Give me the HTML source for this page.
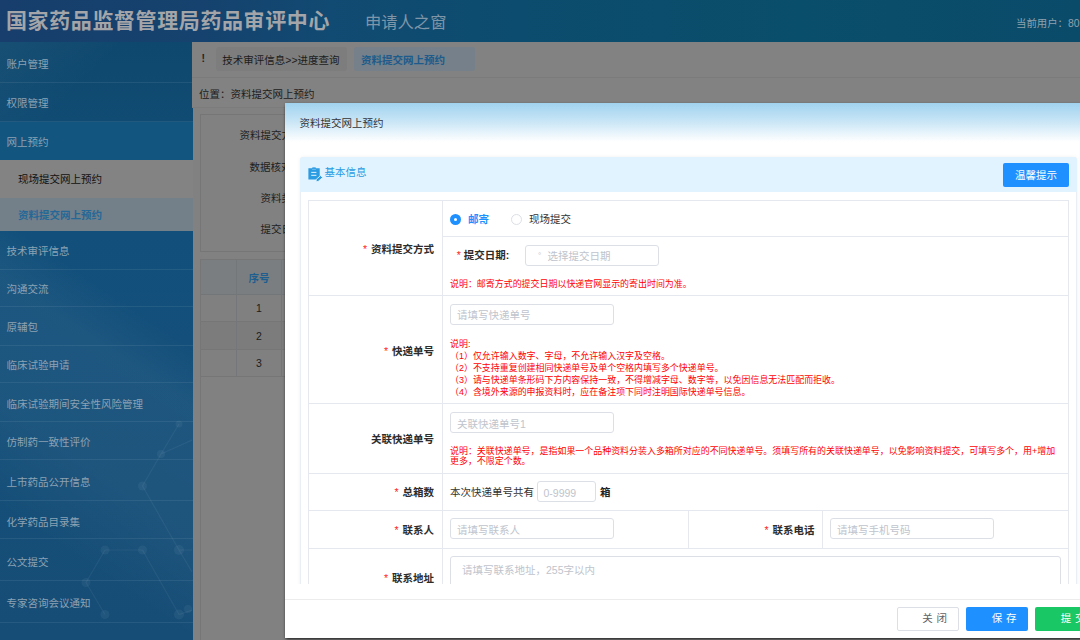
<!DOCTYPE html>
<html lang="zh-CN">
<head>
<meta charset="utf-8">
<title>资料提交网上预约</title>
<style>
*{box-sizing:border-box;margin:0;padding:0}
html,body{width:1080px;height:640px;overflow:hidden}
body{position:relative;background:#818181;font-family:"Liberation Sans","Noto Sans CJK SC",sans-serif;font-size:10.5px;color:#1a1a1a}
.abs{position:absolute}
.t{position:absolute;white-space:nowrap;line-height:14px;height:14px}
/* header */
#hd{position:absolute;left:0;top:0;width:1080px;height:42px;background:linear-gradient(90deg,#173e6c 0,#15426e 200px,#114a72 330px,#0c4c6e 520px,#094e6a 800px,#0a4b6a 1080px)}
#hd .title{left:6px;top:6px;height:30px;line-height:30px;font-size:21px;font-weight:bold;letter-spacing:.6px;color:#a3a5a8}
#hd .sub{left:365px;top:7px;height:30px;line-height:30px;font-size:16.3px;color:#7f95a8}
#hd .user{left:1016px;top:16.7px;color:#8ea2ae;font-size:10.4px}
/* sidebar */
#sb{position:absolute;left:0;top:42px;width:193px;height:598px;background:linear-gradient(214deg,rgba(255,255,255,0) 42%,rgba(255,255,255,.045) 50%,rgba(255,255,255,.04) 68%,rgba(255,255,255,0) 82%),linear-gradient(135deg,rgba(255,255,255,.035) 0,rgba(255,255,255,0) 90px),linear-gradient(180deg,#0f486e 0,#104b73 79px,#12507b 189px,#134f7a 300px,#164d76 598px);overflow:hidden}
#sb .it{position:absolute;left:0;width:193px;border-bottom:1px solid rgba(255,255,255,.075);color:#8da2b3;font-size:10.5px}
#sb .it span{position:absolute;left:6.5px;top:50%;margin-top:-5.4px;line-height:14px;white-space:nowrap}
#sb .sub1{background:#838383;color:#111;border-bottom:0}
#sb .sub2{background:#738089;color:#256897;border-bottom:0;font-weight:bold}
#sb .sub1 span,#sb .sub2 span{left:18px;margin-top:-6.6px}
/* main behind */
#tabs{position:absolute;left:192px;top:42px;width:888px;height:36px;background:#828282;border-bottom:1px solid #7b7b7b}
.tab{position:absolute;top:5px;height:24px;border-radius:3px;line-height:27px;text-align:center;white-space:nowrap}
#pos{position:absolute;left:192px;top:78px;width:888px;height:29.5px;background:#828282;border-bottom:1px solid #7c7c7c}
#panel{position:absolute;left:200px;top:114px;width:900px;height:137.5px;border:1px solid #767676;background:#818181}
#tbl{position:absolute;left:200px;top:259px;width:900px;height:400px;border-left:1px solid #767676;border-top:1px solid #767676}
/* dialog */
#dlg{position:absolute;left:285px;top:103px;width:820px;height:535px;background:#fff;overflow:hidden;box-shadow:0 2px 3px -1px rgba(0,0,0,.8),0 0 2px rgba(0,0,0,.15)}
#dlg .dh{position:absolute;left:0;top:0;width:100%;height:40px;background:linear-gradient(180deg,#a0d2ef 0,#c8e5f6 45%,#ffffff 97%)}
#body{position:absolute;left:0;top:40px;width:100%;height:440.75px;overflow:hidden}
.bd{border:0 solid #e4e7ed}
.inp{position:absolute;height:21px;border:1px solid #dcdfe6;border-radius:3px;background:#fff;color:#c0c4cc;font-size:10.5px}
.inp span{position:absolute;left:6px;top:3.5px;line-height:14px;white-space:nowrap}
.lbl{position:absolute;white-space:nowrap;line-height:14px;font-weight:bold;color:#2c2c2c;text-align:right}
.lbl i,.req{color:#f22;font-style:normal;font-weight:normal;margin-right:4px}
.red{position:absolute;color:#ff0000;font-size:8.96px;white-space:nowrap}
.hl{position:absolute;height:1px;background:#e6e8f0}
.vl{position:absolute;width:1px;background:#e6e8f0}
.btn{position:absolute;top:504.3px;height:23.5px;border-radius:2px;line-height:23.5px;font-size:10.5px;white-space:nowrap}
</style>
</head>
<body>
<div id="hd">
  <div class="t title">国家药品监督管理局药品审评中心</div>
  <div class="t sub">申请人之窗</div>
  <div class="t user">当前用户：80</div>
</div>

<div id="sb">
  <div class="it" style="top:0px;height:41.25px"><span>账户管理</span></div>
  <div class="it" style="top:41.25px;height:38.25px"><span>权限管理</span></div>
  <div class="it" style="top:79.5px;height:38px;border-bottom:0;background:#12557f"><span>网上预约</span></div>
  <div class="it sub1" style="top:117.5px;height:38px"><span>现场提交网上预约</span></div>
  <div class="it sub2" style="top:155.5px;height:33.5px"><span>资料提交网上预约</span></div>
  <div class="it" style="top:189px;height:38.5px"><span>技术审评信息</span></div>
  <div class="it" style="top:227.5px;height:37.75px"><span>沟通交流</span></div>
  <div class="it" style="top:265.25px;height:38.25px"><span>原辅包</span></div>
  <div class="it" style="top:303.5px;height:37.75px"><span>临床试验申请</span></div>
  <div class="it" style="top:341.25px;height:38.75px"><span>临床试验期间安全性风险管理</span></div>
  <div class="it" style="top:380px;height:37.75px"><span>仿制药一致性评价</span></div>
  <div class="it" style="top:417.75px;height:41.25px"><span style="margin-top:-4.6px">上市药品公开信息</span></div>
  <div class="it" style="top:459px;height:38.25px"><span style="margin-top:-4.9px">化学药品目录集</span></div>
  <div class="it" style="top:497.25px;height:41.75px"><span style="margin-top:-4.6px">公文提交</span></div>
  <div class="it" style="top:539px;height:42px"><span>专家咨询会议通知</span></div>
  <svg class="abs" style="left:0;top:0;pointer-events:none" width="192" height="598" viewBox="0 42 192 598">
    <g stroke="rgba(255,255,255,.055)" stroke-width="1.2" fill="none">
      <path d="M179 424L161 454L142.500 486L179 550L192 572M105 550H142.500M105 550L86 582.500L105 614.500M142.500 550L179 614.500L192 610M179 550H192M161 454L192 440"/>
    </g>
    <g fill="rgba(255,255,255,.05)">
      <circle cx="179" cy="424" r="3.500"/><circle cx="161" cy="454" r="4"/><circle cx="142.500" cy="486" r="4.500"/>
      <circle cx="105" cy="550" r="4.500"/><circle cx="142.500" cy="550" r="4.500"/><circle cx="179" cy="550" r="5"/>
      <circle cx="86" cy="582.500" r="4.500"/><circle cx="105" cy="614.500" r="4.500"/><circle cx="179" cy="614.500" r="5"/><circle cx="188" cy="609" r="4"/>
    </g>
  </svg>
</div>

<div id="tabs">
  <div class="t" style="left:9.5px;top:9px;color:#222;font-weight:bold">!</div>
  <div class="tab" style="left:23.5px;width:131px;background:#7d7d7d;color:#1c1c1c">技术审评信息&gt;&gt;进度查询</div>
  <div class="tab" style="left:162px;width:121px;background:#75808a;color:#1c5b8b;font-weight:bold;text-align:left;padding-left:7px">资料提交网上预约</div>
</div>
<div id="pos"><div class="t" style="left:7px;top:9px;color:#1c1c1c">位置：资料提交网上预约</div></div>

<div id="panel">
  <div class="t" style="left:38.5px;top:13px;color:#1e1e1e">资料提交方式：</div>
  <div class="t" style="left:48.5px;top:44.5px;color:#1e1e1e">数据核对码：</div>
  <div class="t" style="left:59.5px;top:75.5px;color:#1e1e1e">资料类型：</div>
  <div class="t" style="left:59.5px;top:107px;color:#1e1e1e">提交日期：</div>
</div>
<div id="tbl">
  <div class="abs" style="left:0;top:0;width:900px;height:35px;background:#7b7e81;border-bottom:1px solid #737679"></div>
  <div class="abs" style="left:0;top:35px;width:900px;height:26.5px;background:#808080;border-bottom:1px solid #767676"></div>
  <div class="abs" style="left:0;top:61.5px;width:900px;height:28px;background:#7c7c7c;border-bottom:1px solid #767676"></div>
  <div class="abs" style="left:0;top:89.5px;width:900px;height:27px;background:#808080;border-bottom:1px solid #767676"></div>
  <div class="abs" style="left:35px;top:0;width:1px;height:116.5px;background:#747779"></div>
  <div class="abs" style="left:80px;top:0;width:1px;height:116.5px;background:#747779"></div>
  <div class="t" style="left:36px;width:44px;text-align:center;top:10.5px;color:#1f5f8f;font-weight:bold">序号</div>
  <div class="t" style="left:36px;width:44px;text-align:center;top:41px;color:#1c1c1c">1</div>
  <div class="t" style="left:36px;width:44px;text-align:center;top:68.5px;color:#1c1c1c">2</div>
  <div class="t" style="left:36px;width:44px;text-align:center;top:95.5px;color:#1c1c1c">3</div>
</div>

<div id="dlg">
  <div class="dh"><div class="t" style="left:14.5px;top:12.8px;color:#333">资料提交网上预约</div></div>
  <div id="body">
    <!-- section panel -->
    <div class="abs" style="left:14.5px;top:14px;width:777px;height:600px;border:1px solid #eaeef5;border-radius:3px;box-shadow:0 0 4px rgba(0,0,0,.06)"></div>
    <div class="abs" style="left:14.5px;top:14px;width:777px;height:35px;background:#e1f3fe;border-radius:3px 3px 0 0"></div>
    <svg class="abs" style="left:22.6px;top:23.7px" width="15" height="15" viewBox="0 0 15 15">
      <path d="M0.4 1.25H4.1V0.6H5.4L6 0L6.6 0.6H7.9V1.25H11.7V9.3L8.7 12.5H0.4Z" fill="#2b9be2"/>
      <rect x="4.1" y="1.9" width="3.8" height=".7" fill="#8ccaf2"/>
      <rect x="3.2" y="4.85" width="5.2" height="1.1" fill="#d4ecfb"/>
      <rect x="3.2" y="7.8" width="5.2" height="1.1" fill="#d4ecfb"/>
      <path d="M8.3 12.3L12.6 8.6L14.6 10.6L10.3 14.3L8 14.8Z" fill="#2b9be2" stroke="#e1f3fe" stroke-width=".9"/>
    </svg>
    <div class="t" style="left:39.5px;top:22.1px;color:#2b9be2">基本信息</div>
    <div class="abs" style="left:718px;top:20px;width:66px;height:23.5px;background:#1e90ff;border-radius:2px;color:#fff;text-align:center;line-height:25px">温馨提示</div>

    <!-- table lines -->
    <div class="hl" style="left:23px;top:57px;width:761px"></div>
    <div class="vl" style="left:23px;top:57px;height:400px"></div>
    <div class="vl" style="left:783px;top:57px;height:400px"></div>
    <div class="vl" style="left:157px;top:57px;height:400px"></div>
    <div class="hl" style="left:157px;top:93px;width:626px"></div>
    <div class="hl" style="left:23px;top:152px;width:761px"></div>
    <div class="hl" style="left:23px;top:260px;width:761px"></div>
    <div class="hl" style="left:23px;top:330px;width:761px"></div>
    <div class="hl" style="left:23px;top:367px;width:761px"></div>
    <div class="hl" style="left:23px;top:405px;width:761px"></div>
    <div class="vl" style="left:403px;top:367px;height:37.5px"></div>
    <div class="vl" style="left:537px;top:367px;height:37.5px"></div>

    <!-- row 1 -->
    <div class="abs" style="left:165px;top:71px;width:11px;height:11px;border-radius:50%;background:#1e90ff"></div>
    <div class="abs" style="left:168.6px;top:74.6px;width:3.8px;height:3.8px;border-radius:50%;background:#fff"></div>
    <div class="t" style="left:183px;top:68.5px;color:#1e90ff;font-weight:bold">邮寄</div>
    <div class="abs" style="left:225.5px;top:71px;width:11px;height:11px;border-radius:50%;border:1px solid #dcdfe6;background:#fff"></div>
    <div class="t" style="left:244px;top:68.5px;color:#333">现场提交</div>
    <div class="lbl" style="left:60px;width:89px;top:98.5px"><i>*</i>资料提交方式</div>
    <div class="lbl" style="left:171.7px;top:104.5px;text-align:left"><i style="margin-right:3px">*</i>提交日期:</div>
    <div class="inp" style="left:240px;top:101.5px;width:134px"><span style="left:12px;font-size:8px">°</span><span style="left:21.5px">选择提交日期</span></div>
    <div class="red" style="left:165px;top:134.5px;line-height:12px">说明：邮寄方式的提交日期以快递官网显示的寄出时间为准。</div>

    <!-- row 2 -->
    <div class="lbl" style="left:60px;width:89px;top:201px"><i>*</i>快递单号</div>
    <div class="inp" style="left:165px;top:160.5px;width:164px"><span>请填写快递单号</span></div>
    <div class="red" style="left:165px;top:195.2px;line-height:12px">说明:<br>（1）仅允许输入数字、字母，不允许输入汉字及空格。<br>（2）不支持重复创建相同快递单号及单个空格内填写多个快递单号。<br>（3）请与快递单条形码下方内容保持一致，不得增减字母、数字等，以免因信息无法匹配而拒收。<br>（4）含境外来源的申报资料时，应在备注项下同时注明国际快递单号信息。</div>

    <!-- row 3 -->
    <div class="lbl" style="left:60px;width:89px;top:288.5px">关联快递单号</div>
    <div class="inp" style="left:165px;top:269px;width:164px"><span>关联快递单号1</span></div>
    <div class="red" style="left:165px;top:302.5px;line-height:10px">说明：关联快递单号，是指如果一个品种资料分装入多箱所对应的不同快递单号。须填写所有的关联快递单号，以免影响资料提交，可填写多个，用+增加<br>更多，不限定个数。</div>

    <!-- row 4 -->
    <div class="lbl" style="left:60px;width:89px;top:341.8px"><i>*</i>总箱数</div>
    <div class="t" style="left:165px;top:341.8px;color:#333">本次快递单号共有</div>
    <div class="inp" style="left:252px;top:338px;width:59px"><span style="left:5.5px">0-9999</span></div>
    <div class="t" style="left:315px;top:341.5px;color:#222;font-weight:bold">箱</div>

    <!-- row 5 -->
    <div class="lbl" style="left:60px;width:89px;top:380px"><i>*</i>联系人</div>
    <div class="inp" style="left:165px;top:375px;width:164px"><span>请填写联系人</span></div>
    <div class="lbl" style="left:440px;width:89.5px;top:380px"><i>*</i>联系电话</div>
    <div class="inp" style="left:545px;top:375px;width:164px"><span>请填写手机号码</span></div>

    <!-- row 6 -->
    <div class="lbl" style="left:60px;width:89px;top:427.5px"><i>*</i>联系地址</div>
    <div class="inp" style="left:165px;top:413px;width:611px;height:60px"><span style="left:11px;top:6px">请填写联系地址，255字以内</span></div>
  </div>
  <!-- footer -->
  <div class="hl" style="left:0;top:496px;width:100%;background:#ececec"></div>
  <div class="btn" style="left:611.5px;width:62px;background:#fff;border:1px solid #dcdfe6;color:#606266;line-height:21.5px;padding-left:24.8px;letter-spacing:.4px">关 闭</div>
  <div class="btn" style="left:681px;width:62px;background:#1e90ff;color:#fff;padding-left:25.8px;letter-spacing:.4px">保 存</div>
  <div class="btn" style="left:750px;width:62px;background:#19c865;color:#fff;padding-left:25.8px;letter-spacing:.4px">提 交</div>
</div>
</body>
</html>
